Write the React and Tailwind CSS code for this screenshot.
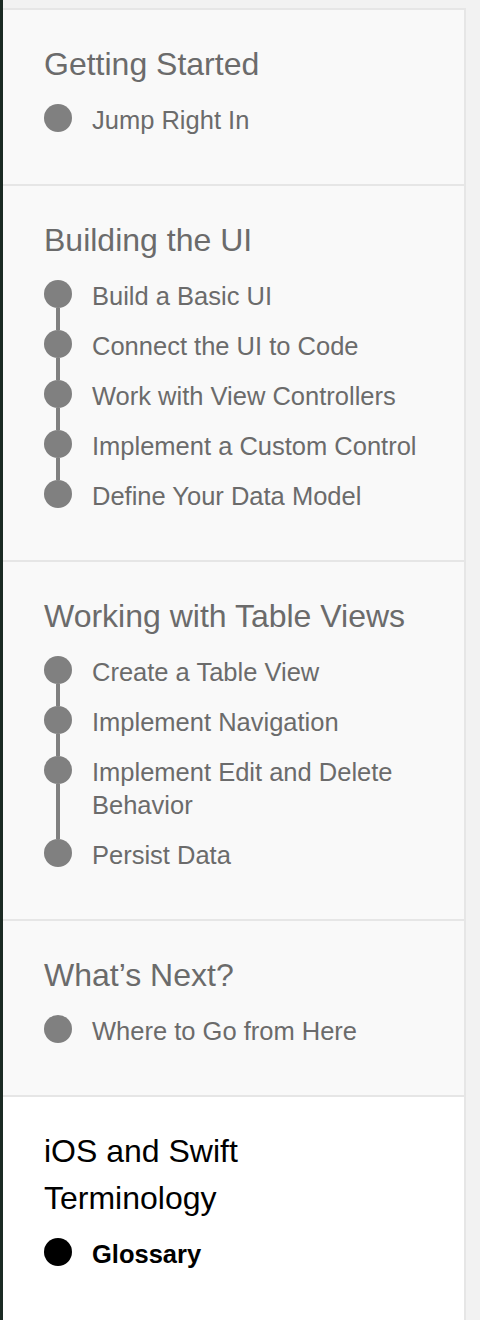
const sections = [
  { title: "Getting Started", items: ["Jump Right In"] },
  {
    title: "Building the UI",
    items: [
      "Build a Basic UI",
      "Connect the UI to Code",
      "Work with View Controllers",
      "Implement a Custom Control",
      "Define Your Data Model",
    ],
  },
  {
    title: "Working with Table Views",
    items: [
      "Create a Table View",
      "Implement Navigation",
      "Implement Edit and Delete Behavior",
      "Persist Data",
    ],
  },
  { title: "What’s Next?", items: ["Where to Go from Here"] },
  { title: "iOS and Swift Terminology", items: ["Glossary"], active: true },
];

function Section({ title, items, active, last }) {
  return (
    <div
      className={`pt-[31px] pb-[47px] pl-[41px] pr-4 ${
        last ? "flex-1 bg-white" : "border-b-2 border-[#e6e6e6] bg-[#f9f9f9]"
      }`}
    >
      <h2
        className={`max-w-[368px] text-[32px] leading-[47px] font-normal ${
          active ? "text-black" : "text-[#6b6b6b]"
        }`}
      >
        {title}
      </h2>
      <ul className="mt-4">
        {items.map((item, i) => {
          const hasNext = i < items.length - 1;
          return (
            <li key={item} className="flex">
              <div className="flex w-7 shrink-0 flex-col items-center">
                <span
                  className={`h-7 w-7 shrink-0 rounded-full ${
                    active ? "bg-black" : "bg-[#808080]"
                  }`}
                />
                {hasNext && <span className="w-1 flex-1 bg-[#808080]" />}
              </div>
              <span
                className={`ml-5 text-[25.5px] leading-[33px] ${
                  hasNext ? "pb-[17px]" : ""
                } ${active ? "font-bold text-black" : "text-[#6b6b6b]"}`}
              >
                {item}
              </span>
            </li>
          );
        })}
      </ul>
    </div>
  );
}

export default function App() {
  return (
    <div
      className="flex min-h-[1320px] w-[480px] bg-[#f2f2f2]"
      style={{ fontFamily: '"Liberation Sans", Arial, sans-serif' }}
    >
      <div className="w-[3px] shrink-0 bg-[#1b2a23]" />
      <div className="flex flex-col pt-2">
        <div className="flex w-[463px] flex-1 flex-col border-t-2 border-r-2 border-[#e6e6e6]">
          {sections.map((s, i) => (
            <Section key={s.title} {...s} last={i === sections.length - 1} />
          ))}
        </div>
      </div>
    </div>
  );
}
